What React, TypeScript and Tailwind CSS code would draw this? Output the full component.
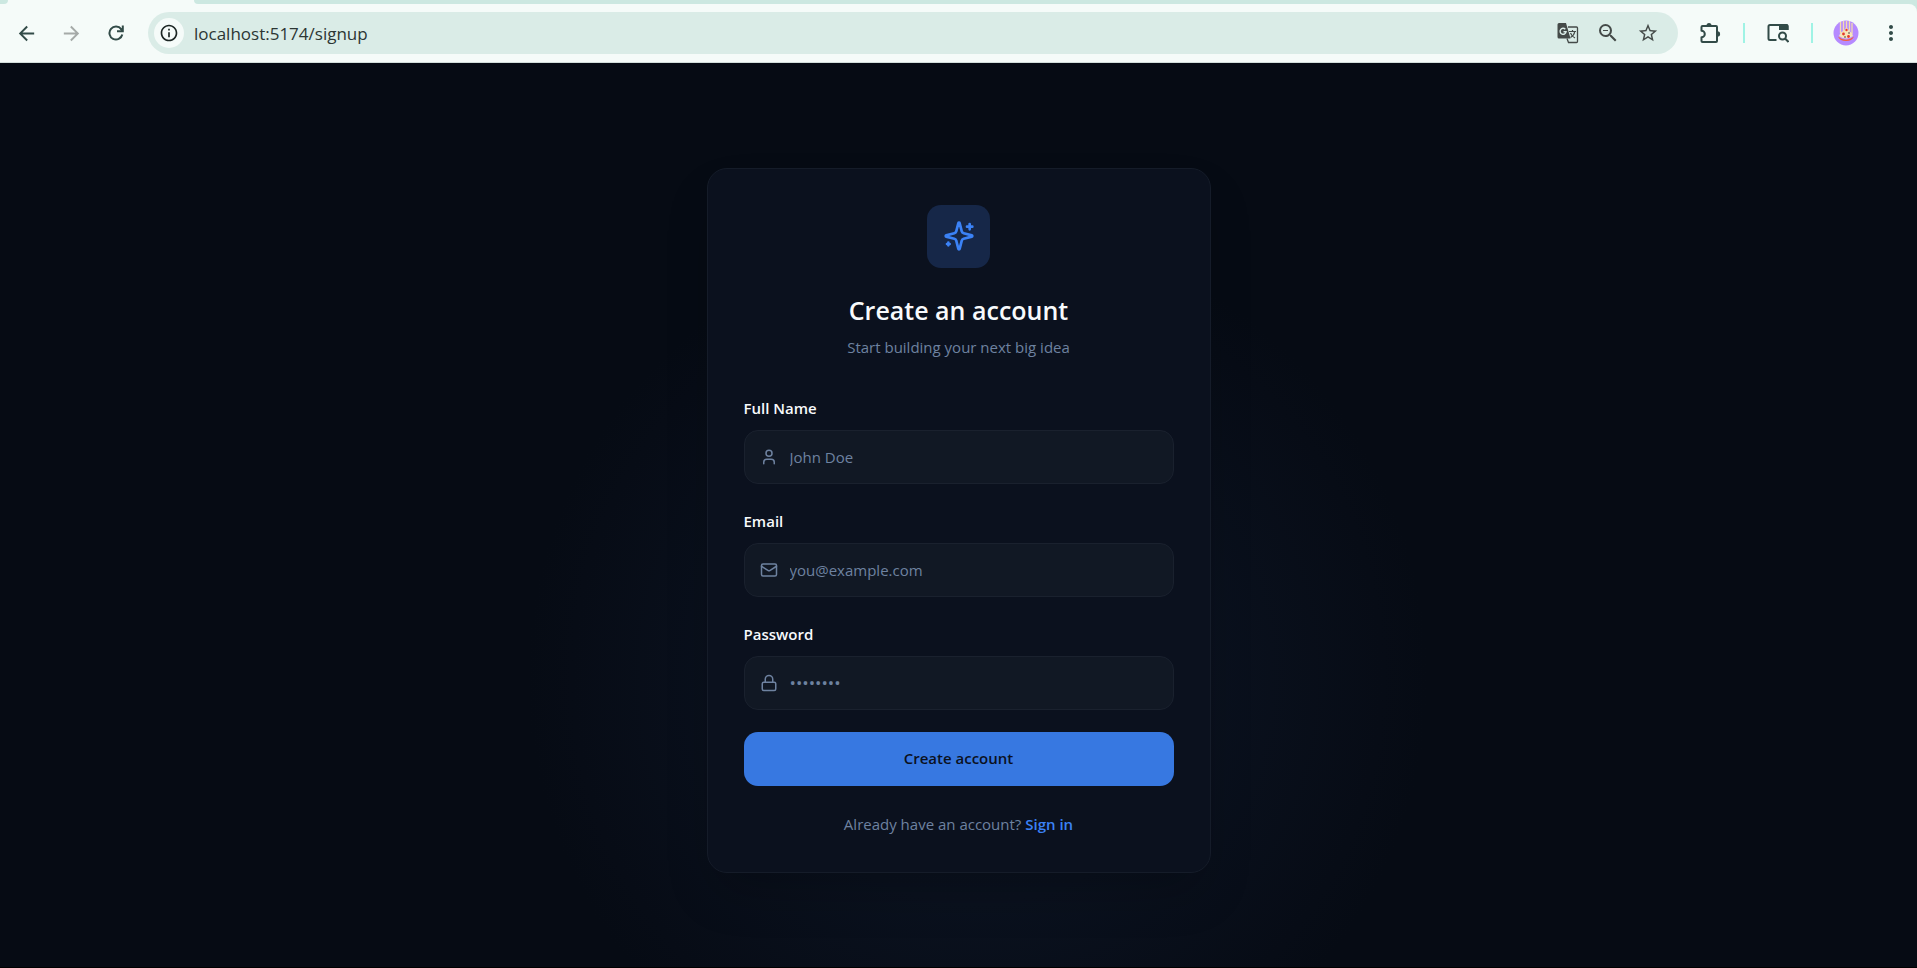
import { useState } from 'react'
import type { ReactNode } from 'react'
import { Lock, Mail, User } from 'lucide-react'
import {
  MdArrowBack,
  MdArrowForward,
  MdInfoOutline,
  MdMoreVert,
  MdStarBorder,
  MdZoomOut,
} from 'react-icons/md'

// Toolbar button that only holds an icon
function ToolButton({ label, children }: { label: string; children: ReactNode }) {
  return (
    <button type="button" aria-label={label} className="flex size-6 shrink-0 items-center justify-center">
      {children}
    </button>
  )
}

function ReloadIcon() {
  return (
    <svg width="16" height="16" viewBox="0 0 16 16" fill="none" stroke="currentColor" strokeWidth="2">
      <path d="M14.300 9.500A6.500 6.500 0 1 1 13.200 4.200L14.500 5.800" />
      <path d="M14.800 0.500V6.300H9" />
      <path d="M12 4.500l2.800-2v3.800z" fill="currentColor" stroke="none" />
    </svg>
  )
}

function TranslateIcon() {
  return (
    <svg width="22" height="22" viewBox="0 0 22 22" fill="none">
      <path d="M11 5h8.500a1 1 0 0 1 1 1v13.500a1 1 0 0 1-1 1H11.500l-1.500-4" stroke="#444a48" strokeWidth="1.300" />
      <path d="M2 1h7l4.500 15.500H2a1.500 1.500 0 0 1-1.500-1.500V2.500A1.500 1.500 0 0 1 2 1z" fill="#444a48" />
      <path d="M8.300 7.200a3 3 0 1 0 .8 2.500H6.500" stroke="#daece7" strokeWidth="1.400" />
      <path d="M12 9.500h7M15.500 8v1.500M17.800 9.500c-.5 3-2.500 5-4.300 6M13.500 11c.8 2 2.500 4 4.500 5" stroke="#444a48" strokeWidth="1.200" />
    </svg>
  )
}

function PuzzleIcon() {
  return (
    <svg width="24" height="24" viewBox="0 0 24 24" fill="none">
      <path
        d="M4.500 5H18a1 1 0 0 1 1 1v14a1 1 0 0 1-1 1H4.500a1 1 0 0 1-1-1v-3.700a3.300 3.300 0 0 0 0-6.600V6a1 1 0 0 1 1-1z"
        stroke="currentColor"
        strokeWidth="2"
        strokeLinejoin="round"
      />
      <path d="M8.500 4.500a2.500 2.500 0 0 1 5 0z" fill="currentColor" />
      <path d="M19.500 10.300a2.600 2.600 0 0 1 0 5.200z" fill="currentColor" />
    </svg>
  )
}

function TabSearchIcon() {
  return (
    <svg width="22" height="20" viewBox="0 0 22 20" fill="none">
      <path d="M9.500 17H3a1.500 1.500 0 0 1-1.500-1.500v-12A1.500 1.500 0 0 1 3 2h16a1.500 1.500 0 0 1 1.500 1.500V7" stroke="#324b48" strokeWidth="2" />
      <path d="M12 1h7.500a2 2 0 0 1 2 2v4H12z" fill="#324b48" />
      <circle cx="15.500" cy="13" r="3.500" stroke="#324b48" strokeWidth="2" />
      <path d="M18 15.500l3.500 3.500" stroke="#324b48" strokeWidth="2" />
    </svg>
  )
}

function Avatar() {
  return (
    <svg width="26" height="26" viewBox="0 0 26 26" className="shrink-0">
      <circle cx="13" cy="13" r="12.500" fill="#b58aff" />
      <path d="M7.500 2v11M10.500 1v10M13.500 1v8M16.500 1v10M19 3v11" stroke="#f3dcae" strokeWidth="1.300" />
      <path d="M5 16.500q8 6.500 16 0q-2 4.500-8 4.500t-8-4.500z" fill="#f4613c" />
      <path d="M6 16q2-5 5-5 1-3 2.500-3t2.500 3q3 1 4 5-7 5-14 0z" fill="#f8e6b8" />
      <circle cx="13.500" cy="10" r="1.200" fill="#e5382a" />
      <circle cx="10.500" cy="14" r="1.400" fill="#e5382a" />
      <circle cx="15.500" cy="16.500" r="1.400" fill="#e5382a" />
      <path d="M11 17h2M15 13h2" stroke="#4a4a4a" strokeWidth="1.200" />
    </svg>
  )
}

function SparklesIcon() {
  return (
    <svg
      width="32"
      height="32"
      viewBox="0 0 24 24"
      fill="none"
      stroke="#3b82f6"
      strokeWidth="2"
      strokeLinecap="round"
      strokeLinejoin="round"
    >
      <path d="M9.937 15.500A2 2 0 0 0 8.500 14.063l-6.135-1.582a.5.5 0 0 1 0-.962L8.500 9.936A2 2 0 0 0 9.937 8.500l1.582-6.135a.5.5 0 0 1 .963 0L14.063 8.500A2 2 0 0 0 15.500 9.937l6.135 1.581a.5.5 0 0 1 0 .964L15.500 14.063a2 2 0 0 0-1.437 1.437l-1.582 6.135a.5.5 0 0 1-.963 0z" />
      <path d="M20 3v4M22 5h-4M4 17v2M5 18H3" />
    </svg>
  )
}

function BrowserBar() {
  return (
    <header className="border-b border-[#d3dedb] bg-[#cce8e1] font-['Open_Sans','Noto_Sans',sans-serif]">
      {/* bottom edge of the tab strip, open where the active tab joins the toolbar */}
      <div className="flex h-1 justify-between bg-[#f5fbf9]">
        <div className="w-2 rounded-br-lg bg-[#cce8e1]" />
        <div className="ml-[186px] flex-1 rounded-bl-lg bg-[#cce8e1]" />
      </div>
      <div className="flex h-[58px] items-center rounded-tr-lg bg-[#f5fbf9] px-3.5">
        <nav className="mr-5 flex items-center gap-[21px] text-[#324b48]">
          <ToolButton label="Back"><MdArrowBack size={23} /></ToolButton>
          <ToolButton label="Forward"><MdArrowForward size={23} className="text-[#a5aaa8]" /></ToolButton>
          <ToolButton label="Reload"><ReloadIcon /></ToolButton>
        </nav>
        <div className="flex h-[42px] flex-1 items-center rounded-full bg-[#daece7] pr-[18px] pl-1.5">
          <button
            type="button"
            aria-label="Site information"
            className="flex size-[30px] items-center justify-center rounded-full bg-[#f5fbf9] text-[#1b2523]"
          >
            <MdInfoOutline size={20} />
          </button>
          <input
            aria-label="Address"
            defaultValue="localhost:5174/signup"
            className="ml-2.5 h-8 min-w-0 flex-1 bg-transparent text-[17px] text-[#2c3634] outline-none"
          />
          <div className="flex items-center gap-4 text-[#444a48]">
            <ToolButton label="Translate"><TranslateIcon /></ToolButton>
            <ToolButton label="Zoom"><MdZoomOut size={24} /></ToolButton>
            <ToolButton label="Bookmark"><MdStarBorder size={22} /></ToolButton>
          </div>
        </div>
        <div className="ml-5 flex items-center gap-[21px] text-[#324b48]">
          <ToolButton label="Extensions"><PuzzleIcon /></ToolButton>
          <span className="h-5 w-0.5 bg-[#9ff3e5]" />
          <ToolButton label="Search tabs"><TabSearchIcon /></ToolButton>
          <span className="h-5 w-0.5 bg-[#9ff3e5]" />
          <ToolButton label="Profile"><Avatar /></ToolButton>
          <ToolButton label="Menu"><MdMoreVert size={26} /></ToolButton>
        </div>
      </div>
    </header>
  )
}

interface FieldProps {
  id: string
  label: string
  type: string
  placeholder: string
  icon: ReactNode
  value: string
  onChange: (value: string) => void
}

function Field({ id, label, type, placeholder, icon, value, onChange }: FieldProps) {
  return (
    <div>
      <label htmlFor={id} className="mb-2.5 block text-[15px] leading-6 font-semibold text-[#f8fafc]">
        {label}
      </label>
      <div className="flex h-[54px] items-center gap-3 rounded-[14px] border border-[#1a212e] bg-[#111824] px-[15px] text-[#6e82a0]">
        {icon}
        <input
          id={id}
          type={type}
          value={value}
          onChange={(e) => onChange(e.target.value)}
          placeholder={placeholder}
          className={`h-full min-w-0 flex-1 bg-transparent text-[#f8fafc] outline-none placeholder:text-[#6e82a0] ${
            type === 'password' ? 'text-[17px]' : 'text-[15px]'
          }`}
        />
      </div>
    </div>
  )
}

export default function App() {
  const [name, setName] = useState('')
  const [email, setEmail] = useState('')
  const [password, setPassword] = useState('')

  return (
    <div className="flex min-h-screen flex-col border-b border-black bg-[#060b14]">
      <BrowserBar />
      <main className="flex flex-1 items-center justify-center bg-[radial-gradient(circle_450px_at_51%_68%,#0b1322_0%,#0a111e_50%,#070c16_90%,#060b14_100%)] px-4 pt-[50px] pb-10 font-['Open_Sans','Noto_Sans',sans-serif]">
        <div className="w-full max-w-[504px] rounded-[20px] border border-[#151c29] bg-[#0b111e] p-9 shadow-2xl">
          <div className="mb-[37px] flex flex-col items-center text-center">
            <div className="mb-6 flex size-[63px] items-center justify-center rounded-[14px] bg-[#162748]">
              <SparklesIcon />
            </div>
            <h1 className="text-[25px] leading-9 font-semibold text-[#f8fafc]">Create an account</h1>
            <p className="mt-[7px] text-[15px] leading-6 text-[#6e82a0]">Start building your next big idea</p>
          </div>

          <form onSubmit={(e) => e.preventDefault()}>
            <div className="flex flex-col gap-[25px]">
              <Field
                id="name"
                label="Full Name"
                type="text"
                placeholder="John Doe"
                icon={<User size={18} />}
                value={name}
                onChange={setName}
              />
              <Field
                id="email"
                label="Email"
                type="email"
                placeholder="you@example.com"
                icon={<Mail size={18} />}
                value={email}
                onChange={setEmail}
              />
              <Field
                id="password"
                label="Password"
                type="password"
                placeholder="••••••••"
                icon={<Lock size={18} />}
                value={password}
                onChange={setPassword}
              />
            </div>
            <button
              type="submit"
              className="mt-[22px] h-[54px] w-full rounded-[14px] bg-[#3778e1] text-[15px] font-semibold text-[#0b111e]"
            >
              Create account
            </button>
          </form>

          <p className="mt-[26px] text-center text-[15px] leading-6 text-[#6e82a0]">
            Already have an account?{' '}
            <a href="#signin" className="font-semibold text-[#3b82f6]">Sign in</a>
          </p>
        </div>
      </main>
    </div>
  )
}
